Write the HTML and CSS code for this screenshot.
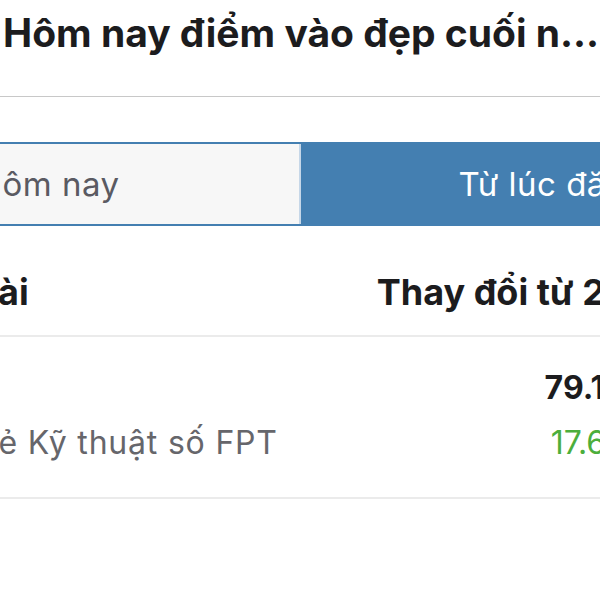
FILE: index.html
```html
<!DOCTYPE html>
<html lang="vi">
<head>
    <meta charset="UTF-8">
    <meta name="viewport" content="width=device-width, initial-scale=1.0">
    <title>Hôm nay điểm vào đẹp cuối năm</title>
    <link rel="stylesheet" href="styles.css">
</head>
<body>

    <div class="screen">
        <header class="nav">
            <h1 class="nav-title">Hôm nay điểm vào đẹp cuối n...</h1>
        </header>

        <div class="segments">
            <button class="seg">Hôm nay</button>
            <button class="seg active">Từ lúc đăng</button>
        </div>

        <div class="stock-table">
            <div class="thead">
                <span>Cổ phiếu có trong bài</span>
                <span>Thay đổi từ 2/12</span>
            </div>
            <div class="row">
                <div class="stock">
                    <b>FRT</b>
                    <span class="name">Công ty Cổ phần Bán lẻ Kỹ thuật số FPT</span>
                </div>
                <div class="change">
                    <b>79.12%</b>
                    <span class="up">17.65%</span>
                </div>
            </div>
        </div>
    </div>

</body>
</html>
```

FILE: styles.css
```css
* {
    margin: 0px;
    padding: 0px;
    box-sizing: border-box;
}

body {
    font-family: 'Inter', 'Roboto', sans-serif;
    background: #fff;
    color: #1c1c1e;
    width: 600px;
    height: 600px;
    overflow: hidden;
}

.screen {
    width: 600px;
}

.nav {
    height: 97px;
    padding: 10px 0 0 3px;
    border-bottom: 1px solid #c8c8c8;
}

.nav-title {
    font-size: 39px;
    font-weight: 700;
    line-height: 46px;
    white-space: nowrap;
}

.segments {
    display: grid;
    grid-template-columns: 1fr 1fr;
    width: 1010px;
    margin: 45px 0 0 -204px;
    border: 2px solid #447fb1;
}

.seg {
    height: 80px;
    border: none;
    font-family: inherit;
    font-size: 33px;
    line-height: 80px;
    letter-spacing: 0.5px;
    background: #f7f7f7;
    color: #5a5a62;
    border-right: 2px solid #c6d7e8;
}

.seg.active {
    background: #447fb1;
    color: #fff;
    border-right: none;
}

.stock-table {
    width: 1014px;
    margin-left: -357px;
}

.thead {
    display: flex;
    justify-content: space-between;
    padding: 44px 0 21px 13px;
    font-size: 36px;
    font-weight: 700;
    line-height: 44px;
    border-bottom: 2px solid #ebebeb;
}

.row {
    display: flex;
    justify-content: space-between;
    padding: 31px 0 34px;
    border-bottom: 2px solid #ebebeb;
}

.stock, .change {
    display: flex;
    flex-direction: column;
    gap: 15px;
    font-size: 32px;
    line-height: 40px;
}

.change {
    text-align: right;
}

.name {
    color: #66666b;
    letter-spacing: 0.8px;
}

.up {
    color: #4cae3c;
}
```
